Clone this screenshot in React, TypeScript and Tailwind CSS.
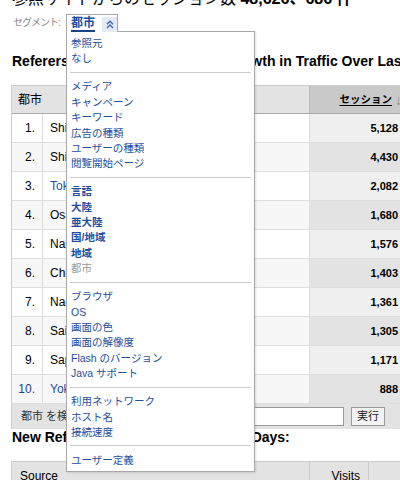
import { Fragment } from "react";

type CityRow = { rank: number; city: string; sessions: string; link?: boolean };

const rows: CityRow[] = [
  { rank: 1, city: "Shinjuku", sessions: "5,128" },
  { rank: 2, city: "Shibuya", sessions: "4,430" },
  { rank: 3, city: "Tokyo", sessions: "2,082", link: true },
  { rank: 4, city: "Osaka", sessions: "1,680" },
  { rank: 5, city: "Nakano", sessions: "1,576" },
  { rank: 6, city: "Chiyoda", sessions: "1,403" },
  { rank: 7, city: "Nagoya", sessions: "1,361" },
  { rank: 8, city: "Saitama", sessions: "1,305" },
  { rank: 9, city: "Sapporo", sessions: "1,171" },
  { rank: 10, city: "Yokohama", sessions: "888", link: true },
];

const groups: { label: string; bold?: boolean; current?: boolean }[][] = [
  [{ label: "参照元" }, { label: "なし" }],
  [
    { label: "メディア" },
    { label: "キャンペーン" },
    { label: "キーワード" },
    { label: "広告の種類" },
    { label: "ユーザーの種類" },
    { label: "閲覧開始ページ" },
  ],
  [
    { label: "言語", bold: true },
    { label: "大陸", bold: true },
    { label: "亜大陸", bold: true },
    { label: "国/地域", bold: true },
    { label: "地域", bold: true },
    { label: "都市", current: true },
  ],
  [
    { label: "ブラウザ" },
    { label: "OS" },
    { label: "画面の色" },
    { label: "画面の解像度" },
    { label: "Flash のバージョン" },
    { label: "Java サポート" },
  ],
  [{ label: "利用ネットワーク" }, { label: "ホスト名" }, { label: "接続速度" }],
  [{ label: "ユーザー定義" }],
];

function SegmentMenu() {
  return (
    <div className="absolute left-[66px] top-[14px] z-10 flex flex-col items-start">
      <div className="relative z-20 -mb-px flex h-[18px] w-[52px] items-start border border-b-0 border-[#a8a8a8] bg-white">
        <span className="ml-[4px] mt-[1px] border-b-2 border-[#1c3f86] text-[12px] font-bold leading-[14px] text-[#1e4e9e]">
          都市
        </span>
        <span className="ml-auto mt-[2px] flex h-[15px] w-[15px] items-center justify-center bg-[#e2ebf6]">
          <svg width="8" height="9" viewBox="0 0 8 9" fill="none" stroke="#3a66b0" strokeWidth="1.3">
            <path d="M1 4.2 L4 1.2 L7 4.2" />
            <path d="M1 8 L4 5 L7 8" />
          </svg>
        </span>
      </div>
      <div className="w-[189px] border border-[#a8a8a8] bg-white pb-[3px] pt-[4px] shadow-[1px_1px_2px_rgba(0,0,0,0.12)]">
        {groups.map((group, gi) => (
          <Fragment key={gi}>
            {gi > 0 && <div className="mx-[3px] mb-[6.5px] mt-[5px] h-px bg-[#cccccc]" />}
            {group.map((item) => (
              <div
                key={item.label}
                className={`pl-[4px] text-[10.5px] leading-[15.4px] ${
                  item.current ? "text-[#999999]" : "text-[#1e4e9e]"
                } ${item.bold ? "font-bold" : ""}`}
              >
                {item.label}
              </div>
            ))}
          </Fragment>
        ))}
      </div>
    </div>
  );
}

export default function App() {
  return (
    <div className="relative h-[480px] w-[400px] overflow-hidden bg-white font-['Liberation_Sans','Noto_Sans_CJK_JP',sans-serif] text-black">
      <div className="-mt-[11px] h-[20px] whitespace-nowrap pl-[12px] text-[16px] leading-[20px]">
        参照サイトからのセッション数 <span className="font-bold">48,626、686 件</span>
      </div>

      <div className="mt-[5px] flex h-[17px] items-center pl-[13px] text-[10px] tracking-[-1px] text-[#888888]">
        セグメント:
      </div>

      <h2 className="mt-[21px] whitespace-nowrap pl-[12px] text-[14px] font-bold leading-[18px]">
        Referers with the Greatest Total Growth in Traffic Over Last 30 Days
      </h2>

      <div className="ml-[11px] mt-[15px] w-[400px] border-l border-[#cccccc]">
        <div className="grid h-[29px] grid-cols-[297px_100px] border-b border-t border-b-[#aaaaaa] border-t-[#cccccc] bg-[#e3e3e3] text-[12px]">
          <div className="flex items-center pl-[6px]">都市</div>
          <div className="flex items-center justify-end gap-[3px] border-l border-[#bbbbbb] bg-[#c9c9c9] pr-[7px]">
            <span className="text-[10.5px] font-bold underline underline-offset-2">セッション</span>
            <span className="text-[14px] font-bold leading-none text-[#8a8a8a]">↓</span>
          </div>
        </div>
        {rows.map((r) => {
          const even = r.rank % 2 === 0;
          return (
            <div
              key={r.rank}
              className={`grid h-[29px] grid-cols-[30px_267px_100px] border-b border-[#dddddd] text-[12px] ${
                even ? "bg-[#f7f7f7]" : "bg-white"
              }`}
            >
              <div className={`flex items-center justify-end pr-[7px] ${r.rank === 10 ? "text-[#1e3f8f]" : ""}`}>
                {r.rank}.
              </div>
              <div className={`flex items-center border-l border-[#dddddd] pl-[7px] ${r.link ? "text-[#1e4e9e]" : ""}`}>
                {r.city}
              </div>
              <div
                className={`flex items-center justify-end border-l border-[#dddddd] pr-[11px] text-[11px] font-bold ${
                  even ? "bg-[#e3e3e3]" : "bg-[#efefef]"
                }`}
              >
                {r.sessions}
              </div>
            </div>
          );
        })}
        <div className="flex h-[25px] items-center bg-[#e3e3e3] pl-[9px] text-[11px] text-[#333333]">
          <span>都市 を検索</span>
          <input className="ml-auto h-[19px] w-[265px] border border-[#9a9a9a] bg-white" />
          <button className="ml-[7px] mr-[26px] h-[19px] w-[34px] border border-[#9a9a9a] bg-[#f2f2f2] text-[11px] leading-none text-[#222222]">
            実行
          </button>
        </div>
      </div>

      <h2 className="whitespace-nowrap pl-[12px] text-[14px] font-bold leading-[16px]">
        New Referers with Traffic in Last 30 Days:
      </h2>

      <div className="ml-[11px] mt-[16px] grid h-[29px] w-[400px] grid-cols-[297px_59px_44px] border-l border-t border-[#cccccc] bg-[#e3e3e3] text-[12px]">
        <div className="flex items-center pl-[8px]">Source</div>
        <div className="flex items-center justify-end border-l border-[#cccccc] pr-[8px]">Visits</div>
        <div className="border-l border-[#cccccc]" />
      </div>

      <SegmentMenu />
    </div>
  );
}
